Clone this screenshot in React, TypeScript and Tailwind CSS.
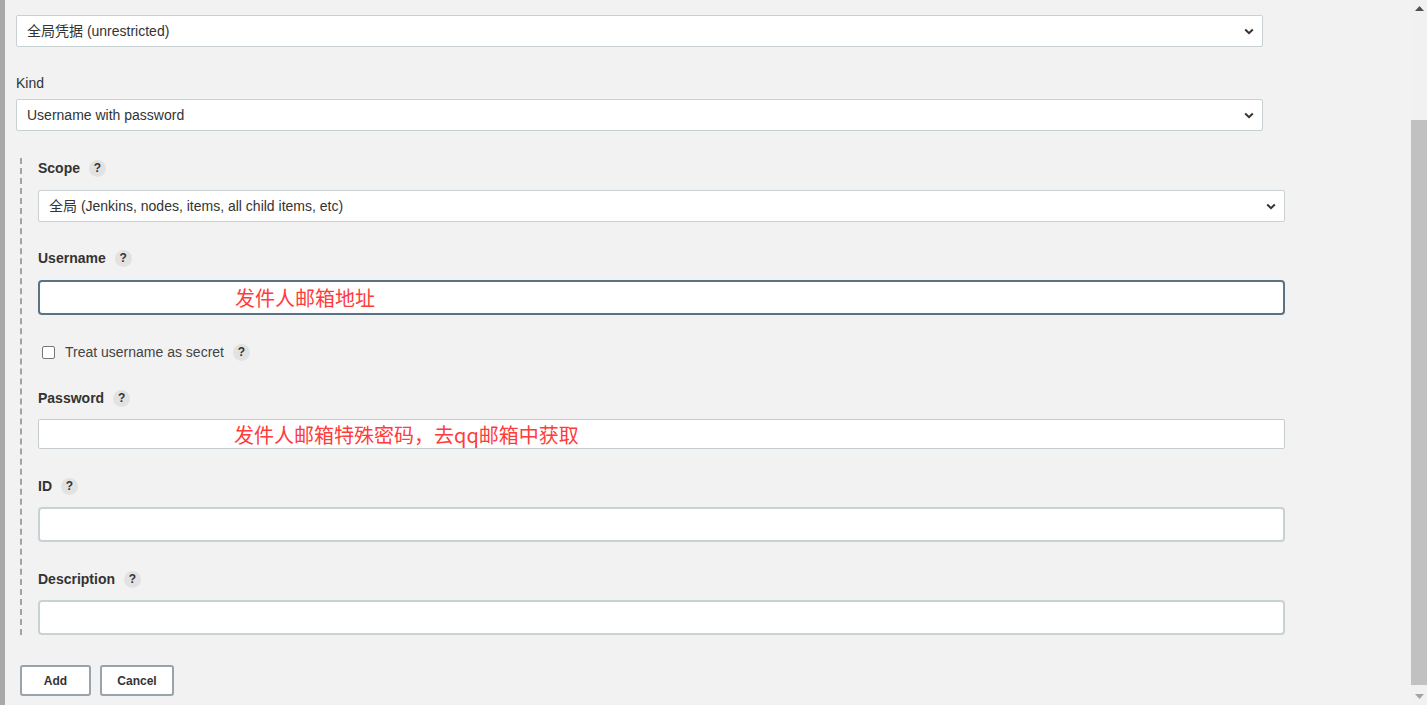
import React from "react"

const font = { fontFamily: '"Liberation Sans", Arial, "Noto Sans CJK SC", sans-serif' }

function Chevron() {
  return (
    <svg width="10" height="7" viewBox="0 0 10 7" className="shrink-0">
      <path d="M1.2 1.5 L5 5.2 L8.8 1.5" fill="none" stroke="#333" strokeWidth="2" />
    </svg>
  )
}

function Help() {
  return (
    <span className="ml-[9px] inline-flex h-[17px] w-[17px] items-center justify-center rounded-full bg-[#e2e2e2] text-[12px] font-bold text-[#333]">
      ?
    </span>
  )
}

function Select({ text }: { text: string }) {
  return (
    <div className="flex h-[32px] w-[1247px] items-center justify-between rounded-[2px] border border-[#c9d0d4] bg-white pl-[10px] pr-[8px] text-[14px] text-[#333]">
      <span>{text}</span>
      <Chevron />
    </div>
  )
}

function Label({ text, className = "" }: { text: string; className?: string }) {
  return (
    <div className={`flex h-[20px] items-center text-[14px] font-bold text-[#333] ${className}`}>
      {text}
      <Help />
    </div>
  )
}

function Note({ text }: { text: string }) {
  return (
    <span
      className="pl-[195px] text-[20px] leading-none text-[#ff3b3b]"
      style={{ fontFamily: '"Noto Sans CJK SC", "Liberation Sans", sans-serif' }}
    >
      {text}
    </span>
  )
}

export default function App() {
  return (
    <div className="flex h-[705px] w-[1427px] overflow-hidden bg-[#f2f2f2]" style={font}>
      <div className="w-[5px] shrink-0 bg-[#a9a9a9]" />

      <div className="flex-1 pl-[11px] pt-[15px]">
        <Select text="全局凭据 (unrestricted)" />

        <div className="mt-[28px] h-[17px] text-[14px] leading-[17px] text-[#333]">Kind</div>
        <div className="mt-[7px]">
          <Select text="Username with password" />
        </div>

        <div className="ml-[4px] mt-[27px] border-l-2 border-dashed border-[#a3a3a3] pl-[16px]">
          <Label text="Scope" />
          <div className="mt-[12px]">
            <Select text="全局 (Jenkins, nodes, items, all child items, etc)" />
          </div>

          <Label text="Username" className="mt-[26px]" />
          <div className="mt-[12px] flex h-[35px] w-[1247px] items-center rounded-[4px] border-2 border-[#5a7282] bg-white">
            <Note text="发件人邮箱地址" />
          </div>

          <div className="mt-[27px] flex h-[20px] items-center pl-[4px] text-[14px] text-[#444]">
            <span className="h-[13px] w-[13px] rounded-[2px] border border-[#767676] bg-white" />
            <span className="ml-[10px]">Treat username as secret</span>
            <Help />
          </div>

          <Label text="Password" className="mt-[26px]" />
          <div className="mt-[11px] flex h-[30px] w-[1247px] items-center rounded-[2px] border border-[#c5cdd1] bg-white pt-[1px]">
            <Note text="发件人邮箱特殊密码，去qq邮箱中获取" />
          </div>

          <Label text="ID" className="mt-[27px]" />
          <div className="mt-[11px] h-[35px] w-[1247px] rounded-[4px] border-2 border-[#c8d2d4] bg-white" />

          <Label text="Description" className="mt-[27px]" />
          <div className="mt-[11px] h-[35px] w-[1247px] rounded-[4px] border-2 border-[#c8d2d4] bg-white" />
        </div>

        <div className="ml-[4px] mt-[30px] flex gap-[9px]">
          <button className="h-[31px] w-[71px] rounded-[3px] border-2 border-[#98a4aa] bg-white text-[12px] font-bold text-[#333]">
            Add
          </button>
          <button className="h-[31px] w-[74px] rounded-[3px] border-2 border-[#98a4aa] bg-white text-[12px] font-bold text-[#333]">
            Cancel
          </button>
        </div>
      </div>

      <div className="flex w-[16px] shrink-0 flex-col bg-[#f1f1f1]">
        <div className="flex h-[17px] items-center justify-center">
          <svg width="9" height="5" viewBox="0 0 9 5">
            <path d="M0 5 L4.5 0 L9 5 Z" fill="#505050" />
          </svg>
        </div>
        <div className="h-[103px]" />
        <div className="flex-1 bg-[#c1c1c1]" />
        <div className="h-[3px]" />
        <div className="flex h-[17px] items-center justify-center">
          <svg width="9" height="5" viewBox="0 0 9 5">
            <path d="M0 0 L9 0 L4.5 5 Z" fill="#a3a3a3" />
          </svg>
        </div>
      </div>
    </div>
  )
}
